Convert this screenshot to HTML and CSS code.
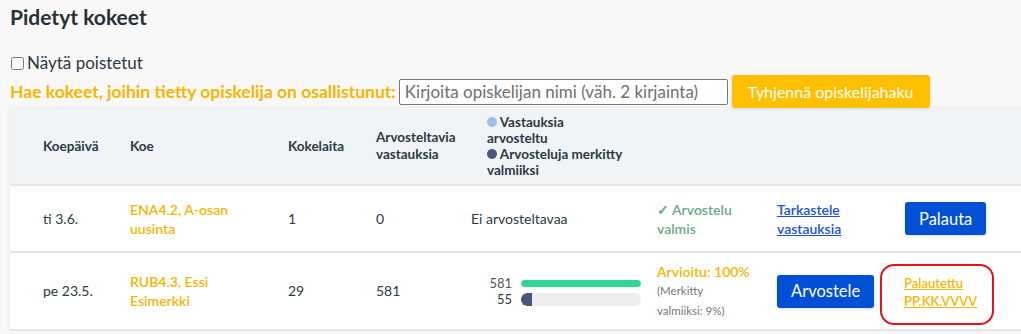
FILE: index.html
```html
<!DOCTYPE html>
<html lang="fi">
<head>
    <meta charset="UTF-8">
    <title>Pidetyt kokeet</title>
    <link rel="stylesheet" href="styles.css">
</head>
<body>
    <h2 class="page-title">Pidetyt kokeet</h2>

    <label class="show-deleted">
        <input type="checkbox">Näytä poistetut
    </label>

    <div class="student-search">
        <span class="search-label">Hae kokeet, joihin tietty opiskelija on osallistunut:</span>
        <input class="search-input" type="text" placeholder="Kirjoita opiskelijan nimi (väh. 2 kirjainta)">
        <button class="clear-button">Tyhjennä opiskelijahaku</button>
    </div>

    <div class="exam-card">
        <table class="exam-table">
            <colgroup>
                <col class="c-date"><col class="c-exam"><col class="c-count"><col class="c-answers">
                <col class="c-progress"><col class="c-status"><col class="c-link"><col class="c-action">
            </colgroup>
            <thead>
                <tr>
                    <th>Koepäivä</th>
                    <th>Koe</th>
                    <th>Kokelaita</th>
                    <th>Arvosteltavia<br>vastauksia</th>
                    <th class="legend">
                        <span class="dot dot-light"></span> Vastauksia<br>arvosteltu<br>
                        <span class="dot dot-dark"></span> Arvosteluja merkitty<br>valmiiksi
                    </th>
                    <th></th>
                    <th></th>
                    <th></th>
                </tr>
            </thead>
            <tbody>
                <tr>
                    <td>ti 3.6.</td>
                    <td><a class="exam-name">ENA4.2, A-osan<br>uusinta</a></td>
                    <td>1</td>
                    <td>0</td>
                    <td>Ei arvosteltavaa</td>
                    <td><span class="status-done">✓ Arvostelu<br>valmis</span></td>
                    <td><a class="view-link" href="#">Tarkastele<br>vastauksia</a></td>
                    <td><button class="blue-button">Palauta</button></td>
                </tr>
                <tr>
                    <td>pe 23.5.</td>
                    <td><a class="exam-name">RUB4.3, Essi<br>Esimerkki</a></td>
                    <td>29</td>
                    <td>581</td>
                    <td class="bars-cell">
                        <div class="bars">
                            <div class="bar-row">
                                <span class="bar-num">581</span>
                                <div class="bar bar-thin"><div class="bar-fill fill-green" style="width: 100%"></div></div>
                            </div>
                            <div class="bar-row">
                                <span class="bar-num bar-num-dark">55</span>
                                <div class="bar bar-thick"><div class="bar-fill fill-dark" style="width: 9%"></div></div>
                            </div>
                        </div>
                    </td>
                    <td>
                        <div class="status-progress">Arvioitu: 100%</div>
                        <div class="status-note">(Merkitty<br>valmiiksi: 9%)</div>
                    </td>
                    <td><button class="blue-button">Arvostele</button></td>
                    <td class="returned-cell">
                        <div class="returned-box">
                            <a class="returned-link" href="#">Palautettu<br>PP.KK.VVVV</a>
                        </div>
                    </td>
                </tr>
            </tbody>
        </table>
    </div>
</body>
</html>
```

FILE: styles.css
```css
* {
    box-sizing: border-box;
}

body {
    margin: 0;
    padding: 0 0 0 10px;
    background-color: #f8f8f8;
    color: #2c3a45;
    font-family: 'Lato', 'Noto Sans', sans-serif;
    overflow: hidden;
}

.page-title {
    margin: 0;
    padding-top: 5px;
    font-size: 21px;
    line-height: 24px;
    font-weight: 700;
    color: #263238;
}

.show-deleted {
    display: flex;
    align-items: center;
    margin-top: 24px;
    font-size: 17px;
    line-height: 20px;
}

.show-deleted input {
    margin: 0 3px 0 1px;
    width: 13px;
    height: 13px;
}

.student-search {
    display: flex;
    align-items: center;
    margin-top: 2px;
}

.search-label {
    color: #f7b500;
    font-weight: 700;
    font-size: 17.5px;
    margin-right: 3px;
}

.search-input {
    width: 329px;
    height: 26px;
    border: 1px solid #767676;
    border-radius: 2px;
    font-family: inherit;
    font-size: 17px;
    padding: 0 5px;
    margin-right: 4px;
}

.search-input::placeholder {
    color: #6f6f6f;
}

.clear-button {
    height: 33px;
    padding: 0 16px;
    border: none;
    border-radius: 3px;
    background-color: #ffc000;
    color: #ffffff;
    font-family: inherit;
    font-size: 16px;
    box-shadow: 0 1px 3px rgba(0, 0, 0, 0.12);
}

/* taulukko */
.exam-card {
    width: 1040px;
    background-color: #ffffff;
    box-shadow: 0 0 4px rgba(0, 0, 0, 0.08);
}

.exam-table {
    width: 100%;
    border-collapse: collapse;
    table-layout: fixed;
    font-size: 14px;
}

.c-date { width: 104px; }
.c-exam { width: 158px; }
.c-count { width: 88px; }
.c-answers { width: 95px; }
.c-progress { width: 186px; }
.c-status { width: 120px; }
.c-link { width: 128px; }

.exam-table th {
    background-color: #f0f4f7;
    height: 77px;
    text-align: left;
    font-weight: 700;
    font-size: 13.5px;
    line-height: 17px;
    padding: 0 8px 0 16px;
    border-bottom: 2px solid #e4e6e8;
    color: #2c3a45;
}

.exam-table th:first-child,
.exam-table td:first-child {
    padding-left: 33px;
}

.exam-table th.legend {
    padding-left: 32px;
    line-height: 16px;
}

.dot {
    display: inline-block;
    width: 10px;
    height: 10px;
    border-radius: 50%;
}

.dot-light { background-color: #a3bbe8; }
.dot-dark { background-color: #45577a; }

.exam-table td {
    padding: 0 8px 0 16px;
    border-bottom: 2px solid #e4e6e8;
    line-height: 18px;
    vertical-align: middle;
}

.exam-table tbody tr:first-child td { height: 67px; }
.exam-table tbody tr:last-child td { height: 78px; }

.exam-name {
    color: #f7b500;
    font-weight: 600;
    line-height: 19px;
}

.status-done {
    color: #6aa888;
    font-weight: 600;
    line-height: 19px;
}

.view-link {
    color: #2151d4;
    font-weight: 600;
    line-height: 19px;
}

.blue-button {
    height: 33px;
    padding: 0 14px;
    border: none;
    border-radius: 3px;
    background-color: #0050d6;
    color: #ffffff;
    font-family: inherit;
    font-size: 16.5px;
    box-shadow: 0 1px 3px rgba(0, 0, 0, 0.15);
}

.exam-table td.bars-cell {
    padding-right: 0;
}

.bars {
    display: flex;
    flex-direction: column;
    gap: 3px;
}

.bar-row {
    display: flex;
    align-items: center;
    height: 13px;
}

.bar-num {
    width: 50px;
    flex-shrink: 0;
    text-align: right;
    padding-right: 9px;
    font-size: 13px;
    color: #555;
}

.bar-num-dark {
    color: #2c3a45;
}

.bar {
    width: 120px;
    flex-shrink: 0;
    background-color: #ededed;
    border-radius: 6px;
    overflow: hidden;
}

.bar-thin { height: 7px; }
.bar-thick { height: 13px; }

.bar-fill {
    height: 100%;
}

.fill-green {
    background-color: #2ed892;
    border-radius: 6px;
}

.fill-dark {
    background-color: #45577a;
    border-radius: 6px 0 0 6px;
}

.status-progress {
    color: #f7b500;
    font-weight: 600;
    line-height: 19px;
}

.status-note {
    color: #777;
    font-size: 11.5px;
    line-height: 20px;
}

.exam-table td.returned-cell {
    padding-top: 6px;
}

.returned-box {
    display: inline-block;
    margin-left: -25px;
    width: 114px;
    height: 61px;
    border: 2px solid #e3141d;
    border-radius: 14px;
    padding: 8px 0 0 22px;
}

.returned-link {
    color: #f7b500;
    font-weight: 600;
    font-size: 13px;
    line-height: 18px;
}
```
